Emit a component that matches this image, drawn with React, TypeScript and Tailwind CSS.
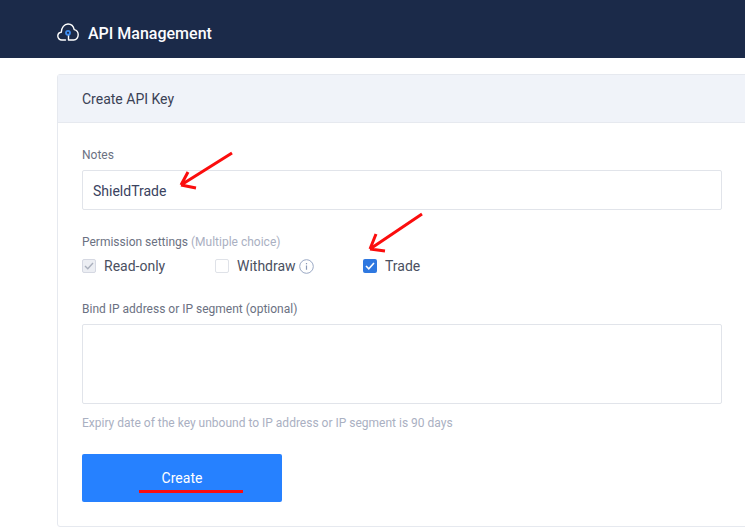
export default function App() {
  return (
    <div className="relative w-[745px] h-[530px] overflow-hidden bg-white font-['Roboto',sans-serif]">
      <header className="h-[58px] bg-[#1b2a49] flex items-center pt-[10px] pl-[57px] gap-[9px]">
        <svg width="22" height="18" viewBox="0 0 22 18" fill="none" className="-mt-[4px]">
          <path d="M8.500 17H4.800C2.600 17 .8 15.300 .8 13.100 .8 11 2.300 9.400 4.300 9.200 4.400 4.700 7.300 1 11 1 14.100 1 16.500 3.300 17.200 6.600 19.500 7.100 21.200 9.200 21.200 11.800 21.200 14.700 19.200 17 16.800 17H11.500V12" stroke="#fff" strokeWidth="1.4" strokeLinecap="round" strokeLinejoin="round" />
          <circle cx="11" cy="9.800" r="2.900" fill="#3f8df0" />
          <circle cx="11" cy="9.800" r="1.100" fill="#1b2a49" />
        </svg>
        <span className="text-[#fbfcff] text-[16px] font-medium">API Management</span>
      </header>
      <section className="ml-[57px] mt-[16px] w-[720px] h-[453px] border border-[#e6e9ef] rounded-[3px]">
        <div className="h-[48px] bg-[#f0f3f9] border-b border-[#e6e9ef] flex items-center pl-[24px] pt-[1px] text-[14px] text-[#3a4155]">Create API Key</div>
        <div className="pl-[24px] w-[664px] text-[12px]">
          <div className="mt-[25px] text-[#6b7182] leading-[14px]">Notes</div>
          <div className="mt-[8px] h-[40px] border border-[#e1e4ea] rounded-[2px] flex items-center pl-[10px] pt-[2px] text-[14px] text-[#3a4260]">ShieldTrade</div>
          <div className="mt-[25px] leading-[14px] text-[#6b7182]">
            Permission settings <span className="text-[#aab0c2]">(Multiple choice)</span>
          </div>
          <div className="mt-[7px] h-[20px] flex items-center text-[14px] text-[#4a505f]">
            <div className="w-[133px] flex items-center gap-[8px]">
              <span className="w-[14px] h-[14px] rounded-[2px] border border-[#d5d8e2] bg-[#eceef3] flex items-center justify-center">
                <svg width="10" height="8" viewBox="0 0 10 8" fill="none"><path d="M1 4l2.800 2.800L9 1" stroke="#aab0bd" strokeWidth="1.400" /></svg>
              </span>
              Read-only
            </div>
            <div className="w-[148px] flex items-center">
              <span className="w-[14px] h-[14px] rounded-[2px] border border-[#dfe2e8] bg-white mr-[8px]" />
              Withdraw
              <svg className="ml-[3px]" width="15" height="15" viewBox="0 0 15 15" fill="none">
                <circle cx="7.500" cy="7.500" r="6.800" stroke="#9aa8c4" strokeWidth="1" />
                <path d="M7.500 6.500v4.200M7.500 4v1.300" stroke="#8b9ab8" strokeWidth="1.200" />
              </svg>
            </div>
            <div className="flex items-center gap-[8px]">
              <span className="w-[14px] h-[14px] rounded-[2px] bg-[#2f78e0] flex items-center justify-center">
                <svg width="10" height="8" viewBox="0 0 10 8" fill="none"><path d="M1 4l2.800 2.800L9 1" stroke="#fff" strokeWidth="1.600" /></svg>
              </span>
              Trade
            </div>
          </div>
          <div className="mt-[26px] leading-[14px] text-[#6b7182]">Bind IP address or IP segment (optional)</div>
          <div className="mt-[8px] h-[80px] border border-[#e1e4ea] rounded-[2px]" />
          <div className="mt-[12px] leading-[14px] text-[#aab0c2]">Expiry date of the key unbound to IP address or IP segment is 90 days</div>
          <button className="mt-[24px] w-[200px] h-[48px] bg-[#2681ff] rounded-[2px] text-white text-[14px] flex items-center justify-center">Create</button>
        </div>
      </section>
      <svg className="absolute left-0 top-0 pointer-events-none" width="745" height="530" fill="none">
        <path d="M232 153L181 185M181 185L196 188M181 185L188 172" stroke="#fb0d0d" strokeWidth="3" />
        <path d="M422 214L370 249M370 249L385 251M370 249L376 234" stroke="#fb0d0d" strokeWidth="3" />
        <path d="M139 491.500H243" stroke="#fb0d0d" strokeWidth="3" />
      </svg>
    </div>
  );
}
